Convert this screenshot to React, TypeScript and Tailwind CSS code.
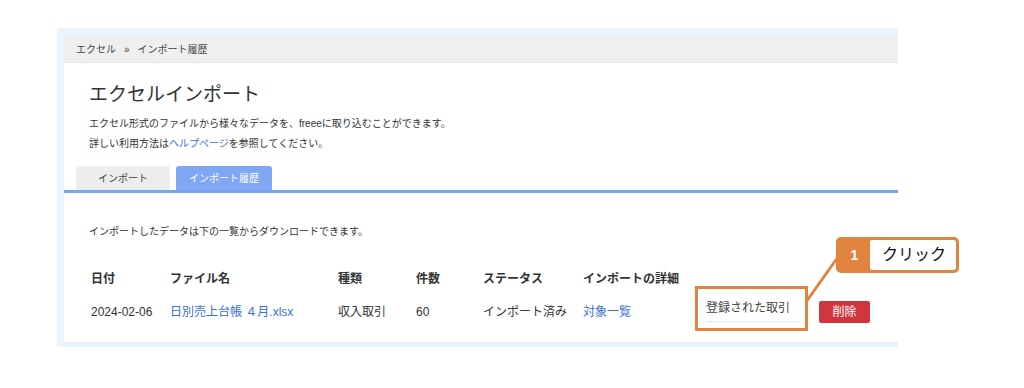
const font = { fontFamily: '"Liberation Sans", "Noto Sans CJK JP", sans-serif' };

const rows = [
  {
    date: "2024-02-06",
    file: "日別売上台帳 ４月.xlsx",
    kind: "収入取引",
    count: "60",
    status: "インポート済み",
  },
];

const App = () => {
  return (
    <div className="relative w-[1024px] h-[388px] bg-white text-[#333]" style={font}>
      <div className="pt-[28px] pl-[57px] w-[898px]">
        <div className="bg-[#edf3fd] pl-[7px] pt-[8px] pb-[4px]">
          <div className="bg-white border-b border-[#e3e8f0]">
            {/* breadcrumb */}
            <div className="h-[27px] bg-[#efefef] border-b border-[#e2e2e2] flex items-center pl-[12px] text-[10px] text-[#444]">
              エクセル
              <span className="mx-[8px] text-[10px]">»</span>
              インポート履歴
            </div>

            <div className="pl-[25px] pt-[20px]">
              <h1 className="text-[19px] leading-[24px] text-[#333]">エクセルインポート</h1>
              <p className="text-[10px] leading-[20px] mt-[7px]">
                エクセル形式のファイルから様々なデータを、freeeに取り込むことができます。
              </p>
              <p className="text-[10px] leading-[20px]">
                詳しい利用方法は<span className="text-[#3b6fd6]">ヘルプページ</span>を参照してください。
              </p>
            </div>

            {/* tabs */}
            <div className="flex gap-[6px] pl-[12px] mt-[12px]">
              <div className="w-[94px] h-[24px] bg-[#eeeded] rounded-t-[3px] flex items-center justify-center text-[10px] text-[#444]">
                インポート
              </div>
              <div className="w-[96px] h-[24px] bg-[#7fa7f4] rounded-t-[3px] flex items-center justify-center text-[10px] text-white">
                インポート履歴
              </div>
            </div>
            <div className="h-[3px] bg-[#78a2f2]" />

            <div className="pl-[25px] pt-[31px] text-[10px]">
              インポートしたデータは下の一覧からダウンロードできます。
            </div>

            {/* table */}
            <div className="pl-[27px] pt-[30px] pb-[8px] text-[12px]">
              <div className="flex font-bold h-[20px] items-center">
                <div className="w-[79px]">日付</div>
                <div className="w-[168px]">ファイル名</div>
                <div className="w-[78px]">種類</div>
                <div className="w-[67px]">件数</div>
                <div className="w-[100px]">ステータス</div>
                <div className="w-[112px]">インポートの詳細</div>
              </div>
              {rows.map((r) => (
                <div key={r.date} className="flex items-center h-[45px]">
                  <div className="w-[79px]">{r.date}</div>
                  <div className="w-[168px] text-[#3b6fd6]">{r.file}</div>
                  <div className="w-[78px]">{r.kind}</div>
                  <div className="w-[67px]">{r.count}</div>
                  <div className="w-[100px]">{r.status}</div>
                  <div className="w-[112px] text-[#3b6fd6]">対象一覧</div>
                  <div className="w-[113px] h-[45px] -mt-[6px] border-[3px] border-[#e0843f] flex items-start pl-[8px] pt-[6px] pr-[3px]">
                    <div className="w-full h-[27px] flex items-center border-b border-[#e8e8e8] text-[#444]">
                      登録された取引
                    </div>
                  </div>
                  <div className="ml-[11px] w-[51px] h-[22px] bg-[#d1363f] rounded-[2px] text-white flex items-center justify-center">
                    削除
                  </div>
                </div>
              ))}
            </div>
          </div>
        </div>
      </div>

      {/* annotation */}
      <svg className="absolute left-0 top-0" width="1024" height="388">
        <line x1="806" y1="302" x2="838" y2="257" stroke="#e0843f" strokeWidth="3" />
      </svg>
      <div className="absolute left-[836px] top-[237px] w-[123px] h-[36px] flex rounded-[5px] border-[3px] border-[#e0843f] bg-[#e0843f] overflow-hidden">
        <div className="w-[31px] flex items-center justify-center text-white text-[14px] font-bold">1</div>
        <div className="flex-1 bg-white rounded-[2px] flex items-center pl-[12px] text-[16px] text-[#111]">
          クリック
        </div>
      </div>
    </div>
  );
};

export default App;
